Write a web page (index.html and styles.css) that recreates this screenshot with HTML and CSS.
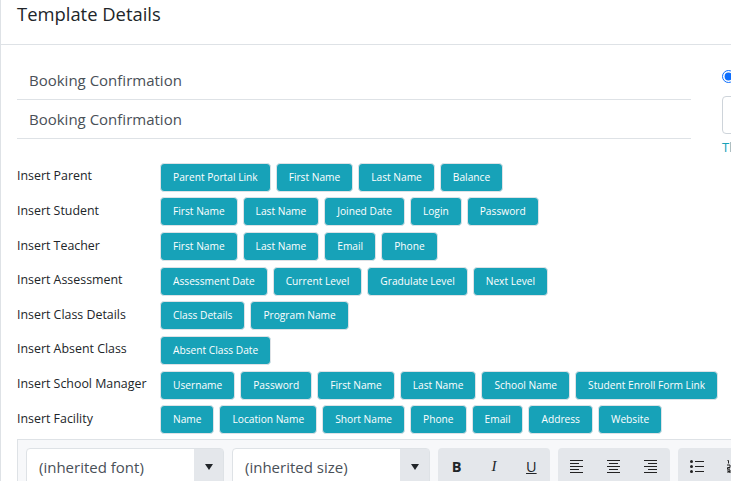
FILE: index.html
```html
<!DOCTYPE html>
<html lang="en">
<head>
<meta charset="utf-8">
<title>Template Details</title>
<link rel="stylesheet" href="styles.css">
</head>
<body>
<div class="card">
  <div class="card-header"><h2>Template Details</h2></div>
  <div class="card-body">
    <div class="top">
      <div class="names">
        <div class="name-line">Booking Confirmation</div>
        <div class="name-line">Booking Confirmation</div>
      </div>
      <div class="side">
        <input class="radio" type="radio" checked>
        <div class="side-input"></div>
        <div class="side-note">This</div>
      </div>
    </div>
    <div class="inserts">
      <div class="row"><span class="label">Insert Parent</span><div class="btns"><a class="btn">Parent Portal Link</a><a class="btn">First Name</a><a class="btn">Last Name</a><a class="btn">Balance</a></div></div>
      <div class="row"><span class="label">Insert Student</span><div class="btns"><a class="btn">First Name</a><a class="btn">Last Name</a><a class="btn">Joined Date</a><a class="btn">Login</a><a class="btn">Password</a></div></div>
      <div class="row"><span class="label">Insert Teacher</span><div class="btns"><a class="btn">First Name</a><a class="btn">Last Name</a><a class="btn">Email</a><a class="btn">Phone</a></div></div>
      <div class="row"><span class="label">Insert Assessment</span><div class="btns"><a class="btn">Assessment Date</a><a class="btn">Current Level</a><a class="btn">Gradulate Level</a><a class="btn">Next Level</a></div></div>
      <div class="row"><span class="label">Insert Class Details</span><div class="btns"><a class="btn">Class Details</a><a class="btn">Program Name</a></div></div>
      <div class="row"><span class="label">Insert Absent Class</span><div class="btns"><a class="btn">Absent Class Date</a></div></div>
      <div class="row"><span class="label">Insert School Manager</span><div class="btns"><a class="btn">Username</a><a class="btn">Password</a><a class="btn">First Name</a><a class="btn">Last Name</a><a class="btn">School Name</a><a class="btn">Student Enroll Form Link</a></div></div>
      <div class="row"><span class="label">Insert Facility</span><div class="btns"><a class="btn">Name</a><a class="btn">Location Name</a><a class="btn">Short Name</a><a class="btn">Phone</a><a class="btn">Email</a><a class="btn">Address</a><a class="btn">Website</a></div></div>
    </div>
    <div class="toolbar">
      <div class="select font"><span class="select-text">(inherited font)</span><span class="caret"><i></i></span></div>
      <div class="select size"><span class="select-text">(inherited size)</span><span class="caret"><i></i></span></div>
      <div class="group">
        <span class="tool b">B</span><span class="tool i">I</span><span class="tool u">U</span>
      </div>
      <div class="group">
        <span class="tool"><svg width="14" height="13" viewBox="0 0 14 13"><path d="M0 .5h13M0 3.500h9M0 6.500h13M0 9.500h9M0 12.500h13" stroke="#222" fill="none"/></svg></span>
        <span class="tool"><svg width="14" height="13" viewBox="0 0 14 13"><path d="M0 .5h13M2 3.500h9M0 6.500h13M2 9.500h9M0 12.500h13" stroke="#222" fill="none"/></svg></span>
        <span class="tool"><svg width="14" height="13" viewBox="0 0 14 13"><path d="M0 .5h13M4 3.500h9M0 6.500h13M4 9.500h9M0 12.500h13" stroke="#222" fill="none"/></svg></span>
      </div>
      <div class="group">
        <span class="tool"><svg width="14" height="13" viewBox="0 0 14 13"><circle cx="1.500" cy="1.500" r="1.500" fill="#222"/><circle cx="1.500" cy="6.500" r="1.500" fill="#222"/><circle cx="1.500" cy="11.500" r="1.500" fill="#222"/><path d="M5 1.500h9M5 6.500h9M5 11.500h9" stroke="#222" fill="none"/></svg></span>
        <span class="tool"><svg width="14" height="13" viewBox="0 0 14 13"><path d="M0.500 0.500h1v3M0 5h3v2.500H0.500V9H3M0 10h3v3H0M0.500 11.500H3" stroke="#222" fill="none"/><path d="M5 1.500h9M5 6.500h9M5 11.500h9" stroke="#222" fill="none"/></svg></span>
      </div>
    </div>
  </div>
</div>
</body>
</html>
```
FILE: styles.css
```css
* { box-sizing: border-box; }
html, body { margin: 0; padding: 0; height: 482px; overflow: hidden; background: #fff; }
body { font-family: "Open Sans", "Noto Sans", sans-serif; color: #212529; width: 731px; }
.card { width: 1100px; border-left: 1px solid #dee2e6; height: 482px; margin-top: -1px; border-top: 1px solid #dee2e6; overflow: hidden; }
.card-header { height: 45px; border-bottom: 1px solid #dee2e6; padding: 0 16px; }
.card-header h2 { margin: 0; font-size: 18.4px; font-weight: 400; line-height: 27px; }
.card-body { padding: 16px 16px 0; }
.top { display: flex; gap: 32px; }
.names { width: 674px; flex: none; }
.name-line { height: 39px; border-bottom: 1px solid #dee2e6; padding: 8px 12px 0; font-size: 15px; line-height: 22px; color: #495057; }
.side { padding-top: 9px; width: 300px; }
.radio { display: block; margin: 0 0 0 -1px; width: 13px; height: 13px; accent-color: #0d6efd; }
.side-input { margin: 13px 0 0 -1px; height: 38px; border: 1px solid #ced4da; border-radius: 4px; }
.side-note { margin: 4px 0 0 -1px; font-size: 13px; line-height: 18px; color: #17a2b8; }
.inserts { margin-top: 6.7px; height: 276.3px; }
.row { display: flex; height: 34.67px; }
.label { width: 143px; flex: none; padding-top: 0.5px; font-size: 12.4px; line-height: 26px; }
.btns { display: flex; gap: 5px; }
.btn { display: block; height: 29px; padding: 0 12px; background: #17a2b8; border: 1px solid #dee2e6; border-radius: 4px; color: #fff; font-size: 10.2px; line-height: 27px; white-space: nowrap; }
.toolbar { display: flex; gap: 8px; height: 60px; padding: 8px 8px 0; background: #f7f8fa; border: 1px solid #dee2e6; }
.select { display: flex; height: 50px; background: #fff; border: 1px solid #dee2e6; border-radius: 4px; font-size: 15px; color: #495057; }
.select-text { flex: 1; padding: 7px 12px 0; line-height: 22px; }
.font { width: 198px; }
.size { width: 198px; }
.caret { width: 29px; background: #e4e7eb; display: flex; justify-content: center; padding-top: 15px; }
.caret i { width: 0; height: 0; border-left: 4.5px solid transparent; border-right: 4.5px solid transparent; border-top: 6px solid #212529; }
.group { display: flex; align-items: flex-start; background: #e4e7eb; border-radius: 4px; height: 50px; }
.tool { width: 37.33px; height: 38px; display: flex; align-items: center; justify-content: center; font-size: 14.5px; color: #212529; }
.b { font-weight: 700; }
.i { font-style: italic; font-family: "Liberation Serif", serif; font-size: 15px; }
.u { text-decoration: underline; }
```
